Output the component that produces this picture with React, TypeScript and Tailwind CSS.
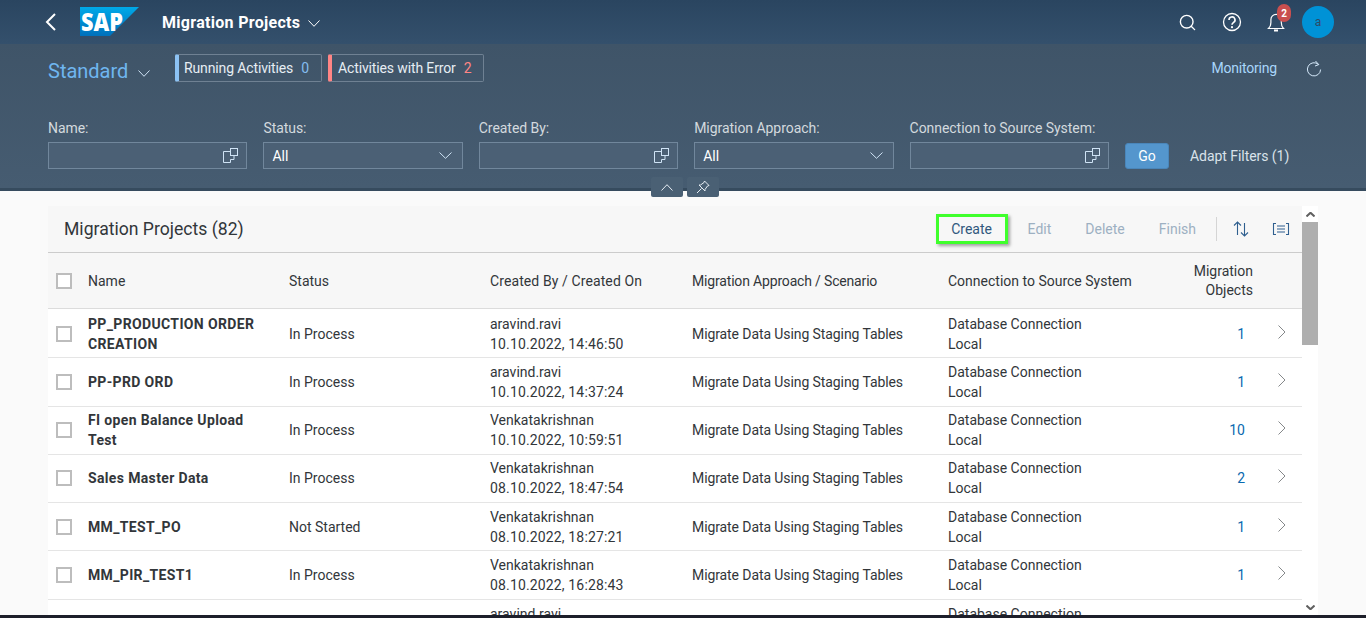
import { Search } from 'lucide-react';

type Row = { name: string; status: string; by: string; on: string; count: string };

const rows: Row[] = [
  { name: 'PP_PRODUCTION ORDER CREATION', status: 'In Process', by: 'aravind.ravi', on: '10.10.2022, 14:46:50', count: '1' },
  { name: 'PP-PRD ORD', status: 'In Process', by: 'aravind.ravi', on: '10.10.2022, 14:37:24', count: '1' },
  { name: 'FI open Balance Upload Test', status: 'In Process', by: 'Venkatakrishnan', on: '10.10.2022, 10:59:51', count: '10' },
  { name: 'Sales Master Data', status: 'In Process', by: 'Venkatakrishnan', on: '08.10.2022, 18:47:54', count: '2' },
  { name: 'MM_TEST_PO', status: 'Not Started', by: 'Venkatakrishnan', on: '08.10.2022, 18:27:21', count: '1' },
  { name: 'MM_PIR_TEST1', status: 'In Process', by: 'Venkatakrishnan', on: '08.10.2022, 16:28:43', count: '1' },
];

// chevron drawn to the exact box it has in the picture
function ChevDown({ w = 13, h = 7, color = '#cfe3f5', sw = 1 }: { w?: number; h?: number; color?: string; sw?: number }) {
  return (
    <svg width={w} height={h} viewBox={`0 0 ${w} ${h}`} fill="none" stroke={color} strokeWidth={sw} className="shrink-0">
      <path d={`M0.5 0.5L${w / 2} ${h - 0.7}L${w - 0.5} 0.5`} />
    </svg>
  );
}

function ValueHelp() {
  return (
    <svg width="15" height="15" viewBox="0 0 15 15" fill="none" stroke="#cfe3f5" strokeWidth="1">
      <rect x="7.5" y="0.5" width="7" height="7" />
      <path d="M7.5 3.5H0.5V14.5H7.5V11.5H11V7.5" />
    </svg>
  );
}

function FilterInput({ label }: { label: string }) {
  return (
    <div className="flex flex-col gap-[4px]">
      <label className="text-[14px] leading-[20px] tracking-[-0.05px] text-[#d3d9de]">{label}</label>
      <div className="flex h-[27px] items-center justify-end border border-[#71879c] bg-[#4b6075] pr-[8px]">
        <ValueHelp />
      </div>
    </div>
  );
}

function FilterSelect({ label }: { label: string }) {
  return (
    <div className="flex flex-col gap-[4px]">
      <label className="text-[14px] leading-[20px] tracking-[-0.05px] text-[#d3d9de]">{label}</label>
      <div className="flex h-[27px] items-center justify-between border border-[#71879c] bg-[#4b6075] pl-[8px] pr-[10px] text-[14px] text-white">
        <span className="pt-[2px]">All</span>
        <ChevDown />
      </div>
    </div>
  );
}

function Checkbox() {
  return <span className="block h-[16px] w-[16px] border-2 border-[#bdbdbd] bg-white" />;
}

export default function App() {
  return (
    <div
      className="flex h-[618px] w-[1366px] flex-col overflow-hidden bg-[#fafafa] text-[#32363a]"
      style={{ fontFamily: 'Roboto, "Noto Sans", sans-serif' }}
    >
      {/* shell bar */}
      <header className="flex h-[44px] shrink-0 items-center bg-gradient-to-b from-[#2a4560] to-[#34506c] pl-[45px] pr-[32px] text-white">
        <svg width="11" height="18" viewBox="0 0 11 18" fill="none" stroke="#fff" strokeWidth="2">
          <path d="M10 1L2 9L10 17" />
        </svg>
        <svg className="ml-[24px] overflow-visible" width="60" height="30" viewBox="0 0 60 30">
          <defs>
            <linearGradient id="sapLogo" x1="0" y1="0" x2="0" y2="1">
              <stop offset="0" stopColor="#00a9e8" />
              <stop offset="1" stopColor="#0070bb" />
            </linearGradient>
          </defs>
          <polygon points="0,0 59,0 30,29 0,29" fill="url(#sapLogo)" />
          <text x="1" y="24" fill="#fff" fontSize="25" fontWeight="800" fontFamily="Open Sans, sans-serif" textLength="42" lengthAdjust="spacingAndGlyphs">SAP</text>
        </svg>
        <span className="ml-[22px] mt-[2px] text-[16px] font-bold tracking-[0.3px]">Migration Projects</span>
        <span className="ml-[8px] mt-[3px]"><ChevDown w={12} h={7} color="#ffffff" /></span>
        <div className="ml-auto flex items-center">
          <Search size={19} strokeWidth={1.75} />
          <svg className="ml-[25px]" width="20" height="20" viewBox="0 0 20 20" fill="none" stroke="#fff">
            <circle cx="10" cy="10" r="8.5" strokeWidth="1.3" />
            <path d="M7 8a3 3 0 1 1 4.6 2.4c-1 .7-1.6 1.2-1.6 2.4" strokeWidth="1.6" />
            <circle cx="10" cy="15.2" r="1.1" fill="#fff" stroke="none" />
          </svg>
          <div className="relative ml-[25px] h-[20px] w-[18px]">
            <svg width="18" height="20" viewBox="0 0 18 20" fill="none" stroke="#fff" strokeWidth="1.2">
              <path d="M1.5 16.5c1.8-1.6 2.4-3 2.4-6V7.5a5.2 5.2 0 0 1 10.4 0v3c0 3 .6 4.4 2.2 6z" />
              <path d="M7 18.5h4" strokeWidth="2" />
            </svg>
            <span className="absolute left-[10px] top-[-8px] flex h-[18px] w-[14px] items-center justify-center rounded-[7px] bg-[#c94f4f] text-[10px] font-bold text-white">
              2
            </span>
          </div>
          <div className="ml-[17px] flex h-[32px] w-[32px] items-center justify-center rounded-full bg-[#0092d6] text-[12px] text-[#2e4a66]">
            a
          </div>
        </div>
      </header>

      {/* dynamic page header */}
      <section className="relative h-[147px] shrink-0 border-b-[3px] border-[#364b5e] bg-gradient-to-b from-[#3f5468] to-[#465c71] pl-[48px] pr-[44px]">
        <div className="flex h-[38px] items-end">
          <div className="-mb-[3px] flex w-[127px] items-center pb-[1px] text-[#6fb6f0]">
            <span className="text-[20px] leading-[26px]">Standard</span>
            <span className="ml-[10px] mt-[4px]"><ChevDown w={12} h={7} /></span>
          </div>
          <div className="flex gap-[6px] text-[14px] tracking-[-0.13px] text-[#e6edf3]">
            <div className="flex h-[28px] w-[147px] items-center rounded-[2px] border border-[#6f8193] border-l-[4px] border-l-[#8cc2f3] pl-[5px]">
              Running Activities<span className="ml-[8px] text-[#84bdf0]">0</span>
            </div>
            <div className="flex h-[28px] w-[156px] items-center rounded-[2px] border border-[#6f8193] border-l-[4px] border-l-[#ff8585] pl-[6px]">
              Activities with Error<span className="ml-[8px] text-[#ff8585]">2</span>
            </div>
          </div>
          <span className="mb-[3px] ml-auto text-[14px] tracking-[-0.2px] text-[#a9d6fb]">Monitoring</span>
          <svg className="mb-[5px] ml-[29px]" width="16" height="17" viewBox="0 0 16 17" fill="none" stroke="#d5e9fa" strokeWidth="1">
            <path d="M12.5 4.5A6.6 6.6 0 1 0 14.6 9.5" />
            <path d="M9.5 1L12.8 4.6L9 6" />
          </svg>
        </div>
        <div className="mt-[36px] flex items-end gap-[16px]">
          <div className="grid w-[1061px] grid-cols-5 gap-[16px]">
            <FilterInput label="Name:" />
            <FilterSelect label="Status:" />
            <FilterInput label="Created By:" />
            <FilterSelect label="Migration Approach:" />
            <FilterInput label="Connection to Source System:" />
          </div>
          <button className="h-[26px] w-[44px] rounded-[3px] border border-[#4a86ba] bg-[#5496cd] pt-[1px] text-[14px] text-white">Go</button>
          <span className="ml-[5px] pb-[2px] text-[14px] tracking-[-0.05px] text-[#d9e2ea]">Adapt Filters (1)</span>
        </div>
        <div className="absolute left-[651px] top-[133px] flex gap-[4px]">
          <span className="flex h-[20px] w-[32px] items-center justify-center rounded-[2px] bg-[#4a6074]">
            <span className="rotate-180"><ChevDown w={12} h={7} color="#e6edf3" /></span>
          </span>
          <span className="flex h-[20px] w-[32px] items-center justify-center rounded-[2px] bg-[#4a6074]">
            <svg width="14" height="14" viewBox="0 0 14 14" fill="none" stroke="#e6edf3" strokeWidth="1">
              <path d="M8.5 1L13 5.5L11.5 6L9 9.5L9 11L3 5L4.5 5L8 2.5z" />
              <path d="M5.5 8.5L1 13" />
            </svg>
          </span>
        </div>
      </section>

      {/* content */}
      <main className="flex min-h-0 flex-1 pl-[48px] pt-[15px]">
        <div className="w-[1254px] overflow-hidden bg-white">
          <div className="flex h-[47px] items-center border-b border-[#cccccc] bg-[#f7f7f7] pl-[16px] pr-[12px]">
            <h2 className="mt-[1px] text-[17.6px] leading-none">Migration Projects (82)</h2>
            <div className="ml-auto flex items-center text-[14px]">
              <button className="mr-[20px] flex h-[30px] w-[72px] items-center justify-center border-[3px] border-[#3fff2c] text-[#31577d] shadow-[2px_2px_3px_rgba(0,0,0,0.35)]">
                Create
              </button>
              <span className="mr-[34px] text-[#9db0c2]">Edit</span>
              <span className="mr-[34px] text-[#9db0c2]">Delete</span>
              <span className="mr-[20px] text-[#9db0c2]">Finish</span>
              <span className="mr-[15px] h-[24px] w-px bg-[#d5d5d5]" />
              <svg className="mr-[22px]" width="18" height="18" viewBox="0 0 18 18" fill="none" stroke="#2f5f8f" strokeWidth="1.1">
                <path d="M5.5 15V2M2 5.5L5.5 2L9 5.5" />
                <path d="M12.5 3V16M9 12.5L12.5 16L16 12.5" />
              </svg>
              <svg width="18" height="14" viewBox="0 0 18 14" fill="none" stroke="#2f5f8f" strokeWidth="1.1">
                <path d="M4 1.5H1.5V12.5H4M14 1.5H16.5V12.5H14" />
                <path d="M5 4H13M5 7H13M5 10H13" />
              </svg>
            </div>
          </div>

          <div className="grid h-[56px] grid-cols-[40px_201px_201px_202px_256px_222px_83px_49px] items-center border-b border-[#dcdcdc] bg-[#f7f7f7] text-[14px] leading-[19px]">
            <span className="pl-[8px]"><Checkbox /></span>
            <span className="pt-[2px]">Name</span>
            <span className="pt-[2px]">Status</span>
            <span className="pt-[2px] tracking-[0.1px]">Created By / Created On</span>
            <span className="pt-[2px] tracking-[-0.17px]">Migration Approach / Scenario</span>
            <span className="pt-[2px]">Connection to Source System</span>
            <span className="text-right">Migration<br />Objects</span>
            <span />
          </div>

          <div className="pt-[0.95px]">
            {rows.map((r, i) => (
              <div
                key={i}
                className="grid h-[48.3px] grid-cols-[40px_201px_201px_202px_256px_222px_83px_49px] items-center border-b border-[#e5e5e5] text-[14px] leading-[20px]"
              >
                <span className="pl-[8px]"><Checkbox /></span>
                <span className="pr-[24px] font-bold tracking-[0.35px] text-[#32363a]">{r.name}</span>
                <span>{r.status}</span>
                <span>{r.by}<br /><span className="tracking-[0.15px]">{r.on}</span></span>
                <span className="tracking-[-0.09px]">Migrate Data Using Staging Tables</span>
                <span>Database Connection<br />Local</span>
                <span className="pr-[8px] text-right text-[#0a6ab0]">{r.count}</span>
                <span className="-mt-[4px] pl-[25px]">
                  <svg width="8" height="14" viewBox="0 0 8 14" fill="none" stroke="#85888a" strokeWidth="1">
                    <path d="M0.5 0.5L7 7L0.5 13.5" />
                  </svg>
                </span>
              </div>
            ))}

            {/* next row, cut by the bottom of the scroll area */}
            <div className="grid h-[48.3px] grid-cols-[40px_201px_201px_202px_256px_222px_83px_49px] text-[14px] leading-[20px]">
              <span />
              <span />
              <span />
              <span className="pt-[4px]">aravind.ravi</span>
              <span />
              <span className="pt-[4px]">Database Connection</span>
            </div>
          </div>
        </div>

        {/* scrollbar */}
        <div className="flex w-[16px] flex-col items-center bg-white">
          <div className="flex h-[16px] shrink-0 items-center">
            <span className="rotate-180"><ChevDown w={9} h={5} color="#606060" sw={2} /></span>
          </div>
          <div className="h-[123px] w-full shrink-0 bg-[#aeaeae]" />
          <div className="flex-1" />
          <div className="flex h-[16px] shrink-0 items-center">
            <ChevDown w={9} h={5} color="#606060" sw={2} />
          </div>
        </div>
      </main>
      <div className="h-[3px] shrink-0 bg-[#1d1f2a]" />
    </div>
  );
}
